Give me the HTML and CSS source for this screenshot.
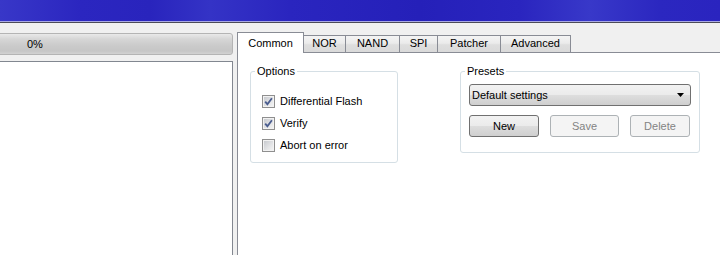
FILE: index.html
```html
<!DOCTYPE html>
<html>
<head>
<meta charset="utf-8">
<link rel="stylesheet" href="styles.css">
</head>
<body>
<div class="titlebar"></div>
<div class="main">
  <div class="leftcol">
    <div class="progress"><span class="progress-text">0%</span></div>
    <div class="listbox"></div>
  </div>
  <div class="tabwidget">
    <div class="tabbar">
      <div class="tab tab-common active">Common</div>
      <div class="tab tab-nor">NOR</div>
      <div class="tab tab-nand">NAND</div>
      <div class="tab tab-spi">SPI</div>
      <div class="tab tab-patcher">Patcher</div>
      <div class="tab tab-advanced">Advanced</div>
    </div>
    <div class="pane">
      <fieldset class="group group-options">
        <legend>Options</legend>
        <label class="check"><span class="box"><svg width="11" height="11" viewBox="0 0 11 11"><path d="M2.2 5.6 L4.4 8.2 L8.9 2.2" fill="none" stroke="#4a5d8f" stroke-width="1.8"/></svg></span>Differential Flash</label>
        <label class="check"><span class="box"><svg width="11" height="11" viewBox="0 0 11 11"><path d="M2.2 5.6 L4.4 8.2 L8.9 2.2" fill="none" stroke="#4a5d8f" stroke-width="1.8"/></svg></span>Verify</label>
        <label class="check"><span class="box"></span>Abort on error</label>
      </fieldset>
      <fieldset class="group group-presets">
        <legend>Presets</legend>
        <div class="combo"><span class="combo-text">Default settings</span><svg class="arrow" width="7" height="4" viewBox="0 0 7 4"><path d="M0 0 H7 L3.5 4 Z" fill="#000"/></svg></div>
        <div class="buttons">
          <div class="btn btn-new">New</div>
          <div class="btn btn-save disabled">Save</div>
          <div class="btn btn-delete disabled">Delete</div>
        </div>
      </fieldset>
    </div>
  </div>
</div>
</body>
</html>
```

FILE: styles.css
```css
* { box-sizing: border-box; }

body {
  margin: 0;
  width: 720px;
  height: 255px;
  overflow: hidden;
  background: #f0f0f0;
  font: 11px/13px "Liberation Sans", Arial, sans-serif;
  color: #000;
  display: flex;
  flex-direction: column;
}

.titlebar {
  flex: none;
  height: 22px;
  border-bottom: 1px solid #a9a8e4;
  background: linear-gradient(to right, #3837c8 0, #2b26c0 80px, #2924bd 150px, #3433c6 210px, #2a25bf 290px, #2520b9 420px, #2a25bf 520px, #3838c9 590px, #2b27c0 660px, #2a24bf 720px);
}

.main {
  flex: none;
  height: 240px;
  border-top: 1px solid #4b4b58;
  display: flex;
  column-gap: 4px;
  padding-top: 9px;
}

.leftcol {
  flex: none;
  width: 233px;
  display: flex;
  flex-direction: column;
  padding-top: 1px;
}

.progress {
  flex: none;
  height: 22px;
  margin-left: -4px;
  border: 1px solid #b4b4b4;
  border-radius: 3px;
  background: linear-gradient(#e9e9e9, #d6d6d6 25%, #cacaca 60%, #c6c6c6 85%, #d2d2d2);
  line-height: 20px;
  padding-left: 30px;
}

.listbox {
  flex: 1;
  margin-top: 6px;
  margin-left: -4px;
  border: 1px solid #828790;
  background: #fff;
}

.tabwidget {
  flex: 1;
  margin-right: -10px;
  display: flex;
  flex-direction: column;
}

.tabbar {
  flex: none;
  height: 20px;
  display: flex;
  align-items: flex-end;
}

.tab {
  height: 17px;
  border: 1px solid #898c95;
  border-bottom: none;
  margin-left: -1px;
  padding-top: 1px;
  text-align: center;
  background: linear-gradient(#f4f4f4, #ebebeb 45%, #dedede 55%, #dadada);
}

.tab.active {
  height: 21px;
  padding-top: 4px;
  margin-bottom: -1px;
  background: #fff;
  position: relative;
  z-index: 1;
}

.tab-common { width: 67px; margin-left: 0; }
.tab-nor { width: 43px; }
.tab-nand { width: 55px; }
.tab-spi { width: 39px; }
.tab-patcher { width: 64px; }
.tab-advanced { width: 71px; }

.pane {
  flex: 1;
  background: #fff;
  border: 1px solid #898c95;
  display: flex;
  align-items: flex-start;
  column-gap: 62px;
  padding: 12px 0 0 12px;
}

.group {
  margin: 0;
  min-width: 0;
  border: 1px solid #d5dfe5;
  border-radius: 3px;
}

.group legend {
  padding: 0 2px;
  line-height: 13px;
}

.group-options {
  width: 148px;
  padding: 17px 0 10px 11px;
  display: flex;
  flex-direction: column;
  gap: 9px;
}

.group-options legend { margin-left: -7px; }

.check {
  display: flex;
  align-items: center;
  gap: 5px;
  height: 13px;
}

.box {
  flex: none;
  width: 13px;
  height: 13px;
  border: 1px solid #8f8f8f;
  background: linear-gradient(135deg, #c3c6cb, #e4e5e7 60%, #f6f6f6);
  box-shadow: inset 0 0 0 1px #f2f2f2;
  display: flex;
}

.group-presets {
  width: 240px;
  padding: 6px 8px 15px 8px;
}

.group-presets legend { margin-left: -4px; }

.combo {
  height: 22px;
  border: 1px solid #707070;
  border-radius: 3px;
  background: linear-gradient(#f2f2f2, #ebebeb 48%, #dddddd 52%, #cfcfcf);
  display: flex;
  align-items: center;
  padding-left: 2px;
}

.arrow {
  margin-left: auto;
  margin-right: 6px;
}

.buttons {
  display: flex;
  column-gap: 11px;
  margin-top: 9px;
}

.btn {
  height: 22px;
  border: 1px solid #707070;
  border-radius: 3px;
  background: linear-gradient(#f2f2f2, #ebebeb 48%, #dddddd 52%, #cfcfcf);
  text-align: center;
  line-height: 20px;
}

.btn.disabled {
  border-color: #adb2b5;
  background: #f4f4f4;
  color: #838383;
}

.btn-new { width: 70px; }
.btn-save { width: 69px; }
.btn-delete { width: 60px; }
```
